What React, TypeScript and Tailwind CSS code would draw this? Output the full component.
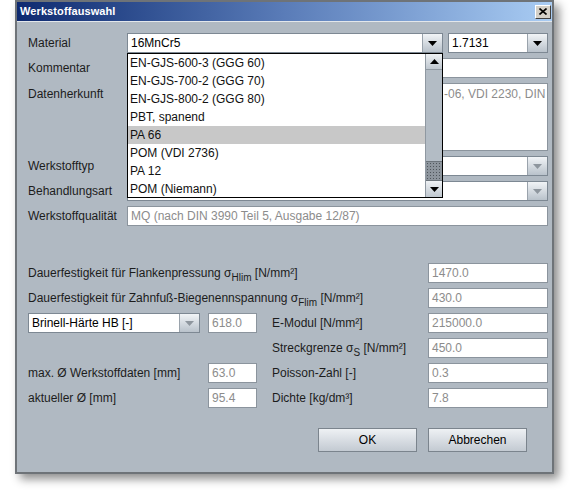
import React from 'react';

const FONT = { fontFamily: '"Liberation Sans", Arial, sans-serif' };

const ITEMS = [
  'EN-GJS-600-3 (GGG 60)',
  'EN-GJS-700-2 (GGG 70)',
  'EN-GJS-800-2 (GGG 80)',
  'PBT, spanend',
  'PA 66',
  'POM (VDI 2736)',
  'PA 12',
  'POM (Niemann)',
];

function Arrow({ up = false, disabled = false }: { up?: boolean; disabled?: boolean }) {
  return (
    <svg width="9" height="5" viewBox="0 0 9 5">
      <polygon points={up ? '4.5,0 9,5 0,5' : '0,0 9,0 4.5,5'} fill={disabled ? '#8e969e' : '#000'} />
    </svg>
  );
}

function ArrowButton({ disabled = false }: { disabled?: boolean }) {
  return (
    <div className="w-[20px] h-full flex items-center justify-center bg-linear-to-b from-[#f1f4f7] to-[#b9c2cb] border-l border-[#9aa3ac]">
      <Arrow disabled={disabled} />
    </div>
  );
}

function Combo({ value, width, disabled = false, darkText = false }: { value?: string; width?: string; disabled?: boolean; darkText?: boolean }) {
  const color = disabled && !darkText ? 'text-[#8f8f8f]' : 'text-black';
  return (
    <div className={`h-[20px] flex bg-white border border-[#7d8893] ${width ?? 'w-full'}`}>
      <div className={`flex-1 pl-[3px] leading-[18px] whitespace-nowrap overflow-hidden ${color}`}>{value}</div>
      <ArrowButton disabled={disabled} />
    </div>
  );
}

function Field({ value, width = 'w-[120px]' }: { value?: string; width?: string }) {
  return (
    <div className={`h-[20px] bg-white border border-[#8b949d] pl-[3px] leading-[18px] text-[#8c8c8c] whitespace-nowrap overflow-hidden ${width}`}>
      {value}
    </div>
  );
}

function Sigma({ sub }: { sub: string }) {
  return (
    <span>
      σ<sub className="text-[10px] relative top-[4px] align-baseline">{sub}</sub>
    </span>
  );
}

function Popup() {
  return (
    <div className="absolute left-0 top-[20px] w-[316px] h-[145px] bg-white border border-black flex z-10">
      <div className="flex-1 flex flex-col">
        {ITEMS.map((item) => (
          <div
            key={item}
            className={`h-[18px] leading-[18px] pl-[2px] text-[#111] ${item === 'PA 66' ? 'bg-[#c8c8c8]' : ''}`}
          >
            {item}
          </div>
        ))}
      </div>
      <div className="w-[17px] flex flex-col bg-[#b3bcc5] border-l border-[#8f98a1]">
        <div className="h-[16px] flex items-center justify-center bg-linear-to-b from-[#eef1f4] to-[#bfc7cf] border-b border-[#8f98a1]">
          <Arrow up />
        </div>
        <div className="flex-1" />
        <div className="h-[20px] bg-[#8d959d] bg-[radial-gradient(circle,#4f565c_0.7px,transparent_1px)] bg-size-[3px_3px] border-y border-[#6c747b]" />
        <div className="h-[16px] flex items-center justify-center bg-linear-to-b from-[#eef1f4] to-[#bfc7cf]">
          <Arrow />
        </div>
      </div>
    </div>
  );
}

export default function App() {
  return (
    <div className="w-[570px] h-[490px] bg-white text-[12px] text-[#1c1c1c]" style={FONT}>
      <div className="ml-[15px] w-[539px] h-[474px] flex flex-col border-2 border-[#6e7378] bg-[#b0b9c2] shadow-[5px_5px_9px_rgba(0,0,0,0.45)]">
        {/* Title bar */}
        <div className="h-[19px] flex items-center justify-between pl-[3px] pr-[1px] bg-linear-to-r from-[#0f2a70] via-[#5a7cb8] to-[#a9ccf3]">
          <span className="text-white font-bold text-[11px] tracking-[0.1px]">Werkstoffauswahl</span>
          <div className="w-[16px] h-[14px] flex items-center justify-center bg-[#d4d0c8] border border-t-white border-l-white border-b-[#404040] border-r-[#404040]">
            <svg width="8" height="7" viewBox="0 0 8 7">
              <path d="M0.5 0.5 L7.5 6.5 M7.5 0.5 L0.5 6.5" stroke="#000" strokeWidth="1.6" />
            </svg>
          </div>
        </div>

        <div className="flex-1 flex flex-col pt-[11px] pl-[11px] pr-[4px] border-t border-[#e3e7eb]">
          {/* Upper section */}
          <div className="grid grid-cols-[99px_421px] gap-y-[5px]">
            <div className="h-[20px] leading-[20px]">Material</div>
            <div className="flex gap-[5px]">
              <div className="relative">
                <Combo value="16MnCr5" width="w-[316px]" />
                <Popup />
              </div>
              <Combo value="1.7131" width="w-[100px]" />
            </div>

            <div className="h-[20px] leading-[20px]">Kommentar</div>
            <Field width="w-full" />

            <div className="pt-[3px] leading-[16px]">Datenherkunft</div>
            <div className="h-[68px] bg-white border border-[#8b949d] pl-[316px] pt-[2px] text-[#8c8c8c]">
              <div className="whitespace-nowrap leading-[16px]">-06, VDI 2230, DIN</div>
            </div>

            <div className="h-[20px] leading-[20px]">Werkstofftyp</div>
            <Combo disabled />

            <div className="h-[20px] leading-[20px]">Behandlungsart</div>
            <Combo disabled />

            <div className="h-[20px] leading-[20px]">Werkstoffqualität</div>
            <Field value="MQ (nach DIN 3990 Teil 5, Ausgabe 12/87)" width="w-full" />
          </div>

          {/* Lower section */}
          <div className="mt-[37px] w-[520px] flex flex-col gap-[5px]">
            <div className="flex h-[20px] items-center">
              <div className="flex-1">
                Dauerfestigkeit für Flankenpressung <Sigma sub="Hlim" /> [N/mm²]
              </div>
              <Field value="1470.0" />
            </div>
            <div className="flex h-[20px] items-center">
              <div className="flex-1">
                Dauerfestigkeit für Zahnfuß-Biegenennspannung <Sigma sub="Flim" /> [N/mm²]
              </div>
              <Field value="430.0" />
            </div>
            <div className="flex h-[20px] items-center">
              <Combo value="Brinell-Härte HB [-]" width="w-[172px]" disabled darkText />
              <div className="ml-[8px]">
                <Field value="618.0" width="w-[49px]" />
              </div>
              <div className="ml-[15px] flex-1">E-Modul [N/mm²]</div>
              <Field value="215000.0" />
            </div>
            <div className="flex h-[20px] items-center">
              <div className="w-[244px]" />
              <div className="flex-1">
                Streckgrenze <Sigma sub="S" /> [N/mm²]
              </div>
              <Field value="450.0" />
            </div>
            <div className="flex h-[20px] items-center">
              <div className="w-[180px]">max. Ø Werkstoffdaten [mm]</div>
              <Field value="63.0" width="w-[49px]" />
              <div className="ml-[15px] flex-1">Poisson-Zahl [-]</div>
              <Field value="0.3" />
            </div>
            <div className="flex h-[20px] items-center">
              <div className="w-[180px]">aktueller Ø [mm]</div>
              <Field value="95.4" width="w-[49px]" />
              <div className="ml-[15px] flex-1">Dichte [kg/dm³]</div>
              <Field value="7.8" />
            </div>
          </div>

          {/* Buttons */}
          <div className="mt-[20px] w-[499px] flex justify-end gap-[11px]">
            <button className="w-[99px] h-[24px] bg-linear-to-b from-[#eef1f4] to-[#c3cad2] border border-[#7b848d] text-black">
              OK
            </button>
            <button className="w-[99px] h-[24px] bg-linear-to-b from-[#eef1f4] to-[#c3cad2] border border-[#7b848d] text-black">
              Abbrechen
            </button>
          </div>
        </div>
      </div>
    </div>
  );
}
